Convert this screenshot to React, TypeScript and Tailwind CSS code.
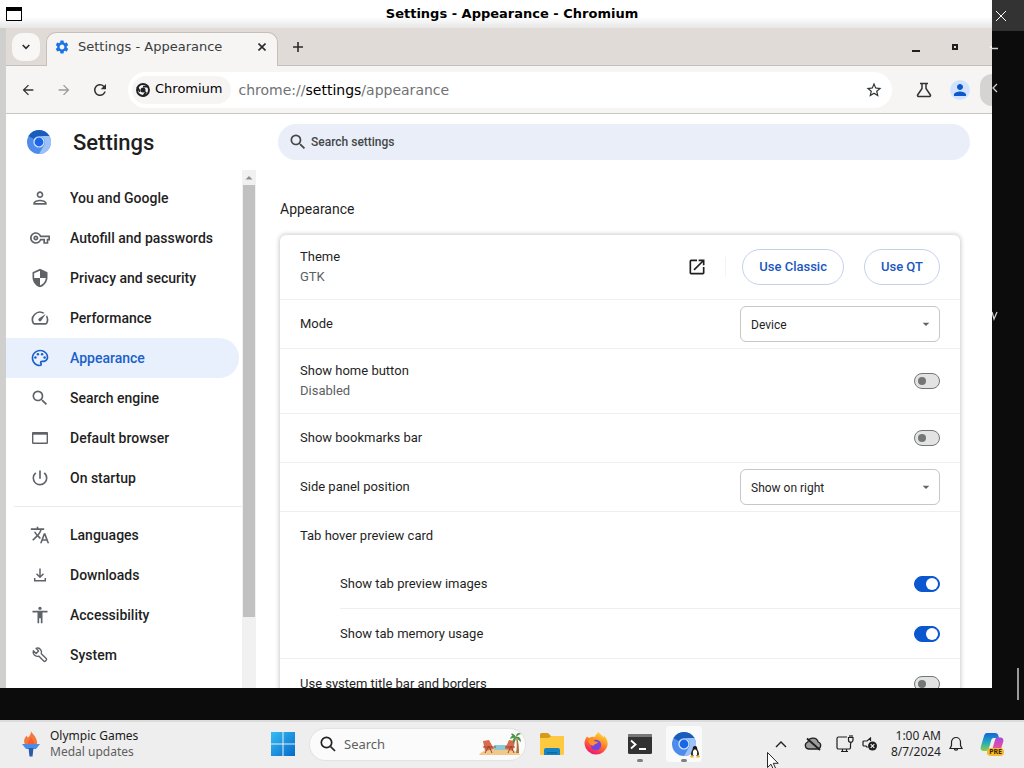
import type { ReactNode } from 'react'
import type { IconType } from 'react-icons'
import {
  MdAccessibility,
  MdArrowBack,
  MdArrowDropDown,
  MdArrowForward,
  MdOpenInNew,
  MdOutlinePalette,
  MdOutlinePerson,
  MdOutlineSpeed,
  MdOutlineVpnKey,
  MdPerson,
  MdPowerSettingsNew,
  MdRefresh,
  MdSearch,
  MdSecurity,
  MdSettings,
  MdStarBorder,
  MdTranslate,
} from 'react-icons/md'

interface IconProps {
  className?: string
}

interface NavItem {
  label: string
  icon: IconType | ((props: IconProps) => ReactNode)
  active?: boolean
}

function BrowserIcon({ className }: IconProps) {
  return (
    <svg viewBox="0 0 20 20" className={className} fill="none" stroke="currentColor" strokeWidth="1.4">
      <rect x="2.7" y="4.7" width="14.6" height="10.600" rx="0.500" />
      <path d="M2.500 5.500h15" strokeWidth="2.400" />
    </svg>
  )
}

function DownloadIcon({ className }: IconProps) {
  return (
    <svg viewBox="0 0 20 20" className={className} fill="none" stroke="currentColor" strokeWidth="1.5">
      <path d="M10 3.500v8.500M6.500 8.800 10 12.300l3.500-3.500M4.700 13v2.700h10.600V13" />
    </svg>
  )
}

function WrenchIcon({ className }: IconProps) {
  return (
    <svg viewBox="0 0 20 20" className={className} fill="none" stroke="currentColor" strokeWidth="1.4" strokeLinejoin="round">
      <path d="M11.300 8.700c.6-1.700.2-3.300-1-4.500C9 2.900 7.400 2.700 6 3.300l2.600 2.600-2.500 2.500-2.700-2.600c-.6 1.500-.3 3.100.9 4.300 1.200 1.200 2.800 1.500 4.400 1l5 5c.5.5 1.200.5 1.700 0l.8-.8c.5-.5.5-1.200 0-1.700z" />
    </svg>
  )
}

const mainNav: NavItem[] = [
  { label: 'You and Google', icon: MdOutlinePerson },
  { label: 'Autofill and passwords', icon: MdOutlineVpnKey },
  { label: 'Privacy and security', icon: MdSecurity },
  { label: 'Performance', icon: MdOutlineSpeed },
  { label: 'Appearance', icon: MdOutlinePalette, active: true },
  { label: 'Search engine', icon: MdSearch },
  { label: 'Default browser', icon: BrowserIcon },
  { label: 'On startup', icon: MdPowerSettingsNew },
]

const moreNav: NavItem[] = [
  { label: 'Languages', icon: MdTranslate },
  { label: 'Downloads', icon: DownloadIcon },
  { label: 'Accessibility', icon: MdAccessibility },
  { label: 'System', icon: WrenchIcon },
]

function ChromiumLogo({ className }: IconProps) {
  return (
    <svg viewBox="0 0 24 24" className={className} aria-hidden="true">
      <circle cx="12" cy="12" r="12" fill="#4f8bea" />
      <path d="M12 0a12 12 0 0 1 10.400 6H12a6 6 0 0 0-5.200 3L1.600 6A12 12 0 0 1 12 0z" fill="#1a5cba" />
      <path d="M22.400 6A12 12 0 0 1 12 24l5.200-9A6 6 0 0 0 12 6z" fill="#9cc2f8" />
      <circle cx="12" cy="12" r="5.600" fill="#d6e6fd" />
      <circle cx="12" cy="12" r="4.400" fill="#1a66e8" />
    </svg>
  )
}

function ChromeGlyph() {
  return (
    <svg viewBox="0 0 16 16" className="size-4" fill="none" aria-hidden="true">
      <circle cx="8" cy="8" r="6" stroke="#202124" strokeWidth="1.9" />
      <circle cx="8" cy="8" r="2.5" fill="#202124" />
      <path d="M8 4.6h5.6M5 9.7 2.2 4.900M11 9.7l-2.8 4.8" stroke="#202124" strokeWidth="1.9" />
    </svg>
  )
}

function TitleBar() {
  return (
    <header className="flex h-7 shrink-0 items-center bg-gradient-to-b from-white from-60% to-[#e6e6e6] pl-1.5">
      <svg viewBox="0 0 16 14" className="h-3.5 w-4" aria-hidden="true">
        <rect x="0.5" y="0.5" width="15" height="13" fill="#fff" stroke="#000" />
        <rect width="16" height="4" fill="#000" />
      </svg>
      <h1 className="flex-1 pl-2.5 text-center font-['DejaVu_Sans',sans-serif] text-[13px] font-bold text-black">
        Settings - Appearance - Chromium
      </h1>
    </header>
  )
}

function TabStrip() {
  return (
    <div className="flex h-[38px] shrink-0 items-end border-b border-[#c5bfba] bg-[#e0dbd7] pl-1.5">
      <button aria-label="Search tabs" className="mb-1 flex size-7 items-center justify-center rounded-[10px] bg-[#f8f7f6]">
        <svg viewBox="0 0 8 6" className="h-1.5 w-2" fill="none" stroke="#2b2b2b" strokeWidth="1.6">
          <path d="M.7 1 4 4.4 7.3 1" />
        </svg>
      </button>
      <div className="relative -mb-px ml-1.5 flex h-[34px] w-[232px] items-center rounded-t-[10px] border border-b-0 border-[#c5bfba] bg-[#f6f5f4] px-[7px] pb-1.5 font-['DejaVu_Sans',sans-serif] text-[13px] text-[#3a3d3f]">
        <MdSettings className="size-4 text-[#1a73e8]" />
        <span className="ml-2 flex-1 whitespace-nowrap">Settings - Appearance</span>
        <button aria-label="Close tab" className="flex size-4 items-center justify-center">
          <svg viewBox="0 0 8 8" className="size-2" stroke="#2b2b2b" strokeWidth="1.6">
            <path d="m.5.5 7 7m0-7-7 7" />
          </svg>
        </button>
      </div>
      <button aria-label="New tab" className="mb-2.5 ml-3 flex size-4 items-center justify-center">
        <svg viewBox="0 0 10 10" className="size-2.5" stroke="#2b2b2b" strokeWidth="1.6">
          <path d="M5 0v10M0 5h10" />
        </svg>
      </button>
      <div className="mb-2.5 ml-auto flex h-4 items-center gap-8">
        <button aria-label="Minimize" className="flex h-3 w-2 items-end pb-px">
          <span className="h-0.5 w-2 bg-[#1f1f1f]" />
        </button>
        <button aria-label="Maximize" className="size-1.5 border-2 border-[#1f1f1f]" />
        <button aria-label="Close window" className="h-0.5 w-0.5 bg-[#f8f7f6]" />
      </div>
    </div>
  )
}

function Toolbar() {
  return (
    <div className="flex h-12 shrink-0 items-center border-b border-[#c9c6c2] bg-[#f6f5f4] pl-3.5 text-[#303335]">
      <button aria-label="Back">
        <MdArrowBack className="size-4" />
      </button>
      <button aria-label="Forward" className="ml-5 text-[#9a9a9a]">
        <MdArrowForward className="size-4" />
      </button>
      <button aria-label="Reload" className="ml-[19px]">
        <MdRefresh className="size-[18px]" />
      </button>
      <div className="ml-[19px] flex h-9 flex-1 items-center rounded-full bg-white pr-[9px] pl-1 font-['DejaVu_Sans',sans-serif] text-sm">
        <span className="flex h-7 items-center gap-1 rounded-full bg-[#f6f5f4] pr-2 pl-[3px] text-[13px] text-black">
          <ChromeGlyph />
          Chromium
        </span>
        <span className="ml-2 flex-1 text-[#6f7274]">
          chrome://<span className="text-black">settings</span>/appearance
        </span>
        <button aria-label="Bookmark this tab">
          <MdStarBorder className="size-[18px]" />
        </button>
      </div>
      <button aria-label="Chrome Labs" className="ml-6">
        <svg viewBox="0 0 16 16" className="size-4" fill="none" stroke="currentColor" strokeWidth="1.5">
          <path d="M4 1.5h8M6 1.5v5L1.600 13a1 1 0 0 0 .8 1.500h11.200a1 1 0 0 0 .8-1.500L10 6.500v-5" />
        </svg>
      </button>
      <button aria-label="Profile" className="ml-[18px] flex size-5 items-center justify-center rounded-full bg-[#d3e3fd]">
        <MdPerson className="size-[18px] text-[#0b57d0]" />
      </button>
      <span className="ml-2.5 h-8 w-3 rounded-l-full bg-[#d6d4d3]" />
    </div>
  )
}

function NavGroup({ items }: { items: NavItem[] }) {
  return (
    <ul>
      {items.map(({ label, icon: Icon, active }) => (
        <li key={label}>
          <a
            href={`#${label.toLowerCase().replaceAll(' ', '-')}`}
            className={`mr-[3px] flex h-10 items-center gap-5 rounded-r-full pl-6 text-sm font-medium ${
              active ? 'bg-[#e8f0fe] text-[#1b60c9]' : 'text-[#1f1f1f]'
            }`}
          >
            <Icon className={active ? 'size-5 text-[#1b60c9]' : 'size-5 text-[#5f6368]'} />
            {label}
          </a>
        </li>
      ))}
    </ul>
  )
}

function Sidebar() {
  return (
    <div className="flex w-[250px] shrink-0">
      <nav className="flex-1 pt-2">
        <NavGroup items={mainNav} />
        <hr className="my-2 ml-2 border-[#ececec]" />
        <NavGroup items={moreNav} />
      </nav>
      <div className="flex w-3.5 flex-col items-center bg-[#f1f1f1]">
        <svg viewBox="0 0 14 15" className="h-[15px] w-3.5 shrink-0" fill="#8f8f8f">
          <path d="M3.5 9.5 7 6l3.5 3.5z" />
        </svg>
        <div className="h-5/6 w-3 bg-[#c1c1c1]" />
      </div>
    </div>
  )
}

interface RowProps {
  label: string
  sub?: string
  children?: ReactNode
  htmlFor?: string
}

function Row({ label, sub, children, htmlFor }: RowProps) {
  return (
    <div className={`flex items-center justify-between ${sub ? 'h-[65px]' : 'h-[49px]'}`}>
      <div className="leading-5">
        {htmlFor ? <label htmlFor={htmlFor}>{label}</label> : label}
        {sub && <p className="text-[#5c5f61]">{sub}</p>}
      </div>
      {children}
    </div>
  )
}

function ToggleRow({ label, sub, id, on }: { label: string; sub?: string; id: string; on?: boolean }) {
  return (
    <Row label={label} sub={sub} htmlFor={id}>
      <input
        id={id}
        type="checkbox"
        role="switch"
        defaultChecked={on}
        className="flex h-4 w-[26px] appearance-none items-center rounded-full border border-[#747775] bg-[#e3e3e3] px-[3px] before:size-2 before:rounded-full before:bg-[#747775] checked:justify-end checked:border-[#0b57d0] checked:bg-[#0b57d0] checked:px-px checked:before:size-3 checked:before:bg-white"
      />
    </Row>
  )
}

function SelectRow({ label, id, options }: { label: string; id: string; options: string[] }) {
  return (
    <Row label={label} htmlFor={id}>
      <div className="relative">
        <select id={id} className="h-9 w-[200px] appearance-none rounded-md border border-[#c7c7c7] bg-white px-2.5 pt-px text-xs">
          {options.map((option) => (
            <option key={option}>{option}</option>
          ))}
        </select>
        <MdArrowDropDown className="pointer-events-none absolute top-2.5 right-1.5 size-4 text-[#5f6368]" />
      </div>
    </Row>
  )
}

function AppearanceCard() {
  const pill = 'h-9 rounded-full border border-[#c4d0ea] px-4 font-medium text-[#1b57c0]'
  return (
    <div className="divide-y divide-[#efefef] rounded-t-md bg-white text-[13px] text-[#1f1f1f] shadow-[0_0_4px_1px_rgba(0,0,0,0.2)] *:px-5">
      <Row label="Theme" sub="GTK">
        <div className="flex items-center">
          <a href="#themes" aria-label="Open themes">
            <MdOpenInNew className="size-5" />
          </a>
          <span className="mr-4 ml-[18px] h-5 w-px bg-[#f3f3f3]" />
          <button className={pill}>Use Classic</button>
          <button className={`${pill} ml-5`}>Use QT</button>
        </div>
      </Row>
      <SelectRow label="Mode" id="mode" options={['Device', 'Light', 'Dark']} />
      <ToggleRow label="Show home button" sub="Disabled" id="home" />
      <ToggleRow label="Show bookmarks bar" id="bookmarks" />
      <SelectRow label="Side panel position" id="side-panel" options={['Show on right', 'Show on left']} />
      <div>
        <h4 className="flex h-12 items-center">Tab hover preview card</h4>
        <div className="-mr-5 ml-10 divide-y divide-[#efefef] *:pr-5">
          <ToggleRow label="Show tab preview images" id="preview-images" on />
          <ToggleRow label="Show tab memory usage" id="memory-usage" on />
        </div>
      </div>
      <ToggleRow label="Use system title bar and borders" id="title-bar" />
    </div>
  )
}

function SettingsPage() {
  return (
    <div className="flex min-h-0 flex-1 flex-col bg-white font-[Roboto,sans-serif]">
      <div className="flex h-14 shrink-0 items-center pr-[22px] pl-[21px]">
        <ChromiumLogo className="size-6" />
        <h2 className="ml-[22px] w-[205px] text-[22px] font-medium text-[#1f1f1f]">Settings</h2>
        <label className="flex h-9 flex-1 items-center gap-[3px] rounded-full bg-[#e9eef9] pl-2.5 text-[#444746]">
          <MdSearch className="size-5" />
          <input
            type="search"
            aria-label="Search settings"
            placeholder="Search settings"
            className="flex-1 bg-transparent text-xs font-medium outline-none placeholder:text-[#444746]"
          />
        </label>
      </div>
      <div className="flex min-h-0 flex-1 overflow-hidden">
        <Sidebar />
        <main className="flex-1 overflow-hidden pt-7 pr-8 pl-6">
          <h3 className="mb-[15px] text-sm leading-[22px] text-[#1f1f1f]">Appearance</h3>
          <AppearanceCard />
        </main>
      </div>
    </div>
  )
}

// Strip of the terminal window that is left visible beside the browser
function TerminalEdge() {
  return (
    <aside className="flex w-8 shrink-0 flex-col font-['Open_Sans',sans-serif] text-sm text-[#d0d0d0]">
      <div className="flex h-[31px] items-center bg-[#333333] pl-1">
        <button aria-label="Close terminal">
          <svg viewBox="0 0 10 10" className="size-2.5" stroke="#fff" strokeWidth="1">
            <path d="m0 0 10 10M10 0 0 10" />
          </svg>
        </button>
      </div>
      <svg viewBox="0 0 6 300" className="h-[300px] w-1.5" fill="none" stroke="#d0d0d0" strokeWidth="1.3">
        <path d="M0 17.5h6M5 53 1 57l4 4M0 281l2 7 3-7" />
      </svg>
      <span className="mt-auto mr-[5px] mb-5 h-8 w-0.5 self-end bg-[#9a9a9a]" />
    </aside>
  )
}

function TorchIcon() {
  return (
    <svg viewBox="0 0 18 26" className="h-[26px] w-[18px]" aria-hidden="true">
      <path d="M9 0c.6 3 7 6 6 13.500H3C1 9.500 3 6 5 4.500c0 1.500.5 2 1 2C8 5 9 3 9 0z" fill="#f2793a" />
      <path d="M9 6c1 3 4 4 3 8H6c-1-4 2-4 3-8z" fill="#fb5a35" />
      <path d="M0 13h18l-4 5H4z" fill="#4a8fe7" />
      <path d="M6.500 17h5l-1 8.500h-3z" fill="#2b5caa" />
    </svg>
  )
}

function WindowsIcon() {
  return (
    <svg viewBox="0 0 24 24" className="size-6">
      <defs>
        <linearGradient id="win" x1="0" y1="0" x2="1" y2="1">
          <stop offset="0" stopColor="#36bdf5" />
          <stop offset="1" stopColor="#0669c9" />
        </linearGradient>
      </defs>
      <path d="M0 0h11.500v11.500H0zM12.500 0H24v11.500H12.500zM0 12.500h11.500V24H0zM12.500 12.500H24V24H12.500z" fill="url(#win)" />
    </svg>
  )
}

function BeachIcon() {
  return (
    <svg viewBox="0 0 42 24" className="h-6 w-[42px]" aria-hidden="true">
      <path d="M0 23c3-5 10-6 20-6s20 2 21 6z" fill="#f0c98a" />
      <path d="M15 13h13v5H15z" fill="#8cc9d8" />
      <path d="m4 9 6-1 5 9-9 2z" fill="#d96a4c" />
      <path d="m26 17 4-9 6 1-2 10z" fill="#d96a4c" />
      <path d="M4 15h13M26 15h10M6 21l4-7m3 7-3-7M29 21l3-7m3 7-3-7" stroke="#9c4630" strokeWidth="1" />
      <path d="M37 5c1 6 1 11 0 16h3c0-6-.5-11-2-16z" fill="#a8713a" />
      <path d="M37 5c-3-3-5-1-6 2 2-1 4-1 6-2zm0 0c0-4 3-5 5-3-1 0-3 1-5 3zm0 0c3-1 5 1 5 5-2-1-3-3-5-5zm0 0c-2 0-4 3-3 6 2-1 3-3 3-6zM37 5c-3-5-5-3-5-3 1 2 3 3 5 3z" fill="#4b9445" />
    </svg>
  )
}

function FolderIcon() {
  return (
    <svg viewBox="0 0 24 22" className="h-[22px] w-6">
      <path d="M0 1.500A1.500 1.500 0 0 1 1.500 0H8l3 3h11.500A1.500 1.500 0 0 1 24 4.500V10H0z" fill="#d99a1b" />
      <path d="M0 5h8.500l3-2h11A1.500 1.500 0 0 1 24 4.500v16a1.500 1.500 0 0 1-1.500 1.500h-21A1.500 1.500 0 0 1 0 20.500z" fill="#fcc93f" />
      <path d="M4 22v-5a2 2 0 0 1 2-2h12a2 2 0 0 1 2 2v5z" fill="#1583c5" />
      <path d="M7 19h10v1.500H7z" fill="#0e6a9e" />
    </svg>
  )
}

function FirefoxIcon() {
  return (
    <svg viewBox="0 0 24 24" className="size-6">
      <defs>
        <linearGradient id="fox" x1="0.8" y1="0" x2="0.3" y2="1">
          <stop offset="0" stopColor="#ffe23c" />
          <stop offset="0.450" stopColor="#ff8a22" />
          <stop offset="0.800" stopColor="#f8364c" />
          <stop offset="1" stopColor="#e3168c" />
        </linearGradient>
      </defs>
      <path d="M3 4.500c1 .5 1.500 1 2 1.500 1.500-1 4-1.500 6-1C11.500 3 13 1 15 0c0 2 3 3 5 5.500 0-1 0-1.500-.3-2C23 6 24 10 23.500 13.500A11.700 11.700 0 0 1 .5 12C.4 9 1.500 6.500 3 4.500z" fill="url(#fox)" />
      <circle cx="12" cy="13" r="5.200" fill="#7543e3" />
      <path d="M4.500 8c3-1 5 0 6.500 1.500 1.500 0 2.500.2 3 1-1 1.500-3 1-4 2.500 0 1-1.500 1-3 0-1.500-1-2.500-3-2.500-5z" fill="#ff9425" />
    </svg>
  )
}

function TerminalIcon() {
  return (
    <svg viewBox="0 0 24 20" className="h-5 w-6">
      <rect width="24" height="20" rx="1.500" fill="#323232" />
      <path d="M0 1.500A1.500 1.500 0 0 1 1.500 0h21A1.500 1.500 0 0 1 24 1.500V3H0z" fill="#777" />
      <path d="m3 6.500 4.500 4L3 14.500M11 15h7" fill="none" stroke="#fff" strokeWidth="1.900" />
    </svg>
  )
}

function TuxBadge() {
  return (
    <svg viewBox="0 0 10 12" className="absolute -right-1 -bottom-0.5 h-3 w-2.5">
      <path d="M5 0c2 0 2.300 1.500 2.300 3.200C8.500 5 9.500 7.500 8.700 10H1.300C.5 7.500 1.500 5 2.700 3.200 2.700 1.500 3 0 5 0z" fill="#1a1a1a" />
      <ellipse cx="5" cy="7" rx="2.200" ry="3.200" fill="#fff" />
      <path d="m0 10.500 2-2 2 3H1zM10 10.500l-2-2-2 3h3zM4 3h2L5 4.200z" fill="#efb31c" />
    </svg>
  )
}

function CopilotIcon() {
  return (
    <svg viewBox="0 0 24 24" className="size-6">
      <defs>
        <linearGradient id="cop-l" x1="0" y1="0" x2="0" y2="1">
          <stop offset="0" stopColor="#1565d8" />
          <stop offset="0.500" stopColor="#20a7c0" />
          <stop offset="1" stopColor="#8ccf4d" />
        </linearGradient>
        <linearGradient id="cop-r" x1="0" y1="0" x2="0" y2="1">
          <stop offset="0" stopColor="#a64be0" />
          <stop offset="0.600" stopColor="#ec4f9a" />
          <stop offset="1" stopColor="#ff9b47" />
        </linearGradient>
      </defs>
      <path d="M7 1h8c2 0 3 1 3.500 3L19 6h-5c-2 0-2.500 1-3 3l-2 7c-.5 2-1.500 3-3 3H4c-3 0-4-2-3-5L4 4c.5-2 1.500-3 3-3z" fill="url(#cop-l)" />
      <path d="M17 23H9c-1.500 0-2-1-1.500-2.500L11 18c1 0 1.500-1 2-3l2-7c.5-2 1.500-2.500 3-2.500h2c3 0 4 2 3 5L20 20c-.5 2-1.500 3-3 3z" fill="url(#cop-r)" />
    </svg>
  )
}

function Tray() {
  return (
    <div className="ml-auto flex items-center pr-5 text-[#1f1f1f]">
      <button aria-label="Show hidden icons">
        <svg viewBox="0 0 12 8" className="h-2 w-3" fill="none" stroke="currentColor" strokeWidth="1.4">
          <path d="M1 7l5-5 5 5" />
        </svg>
      </button>
      <button aria-label="OneDrive" className="ml-[17px]">
        <svg viewBox="0 0 18 14" className="h-3.5 w-[18px]" fill="none" stroke="currentColor" strokeWidth="1.3">
          <path d="M4.500 12a3.600 3.600 0 0 1-.7-7 5.400 5.400 0 0 1 10.400 0 3.600 3.600 0 0 1-.7 7z" fill="#9c9c9c" />
          <path d="m3 1.500 13 11.500" strokeWidth="1.800" />
        </svg>
      </button>
      <button aria-label="Network" className="ml-3.5">
        <svg viewBox="0 0 18 18" className="size-[18px]" fill="none" stroke="currentColor" strokeWidth="1.200">
          <path d="M11 2H2.500A1.500 1.500 0 0 0 1 3.500v9A1.500 1.500 0 0 0 2.500 14H13a1.500 1.500 0 0 0 1.500-1.500V9M5 16.500h7M6.500 14v2.500m4-2.500v2.500M12.500 2.500h4.500V5a2 2 0 0 1-4.500 0zM14 0v2.500M16 0v2.500M14.700 7v2" />
        </svg>
      </button>
      <button aria-label="Volume" className="ml-2">
        <svg viewBox="0 0 16 14" className="h-3.5 w-4" fill="none" stroke="currentColor" strokeWidth="1.200">
          <path d="M8.500 4V1L5 4H2a1 1 0 0 0-1 1v3a1 1 0 0 0 1 1h2l1.500 1.500" />
          <circle cx="10.500" cy="9" r="4.500" fill="currentColor" stroke="none" />
          <path d="m8.700 7.200 3.600 3.600m0-3.600-3.600 3.600" stroke="#eee" />
        </svg>
      </button>
      <time className="ml-[13px] text-right">
        1:00 AM
        <br />
        8/7/2024
      </time>
      <button aria-label="Notifications" className="ml-2">
        <svg viewBox="0 0 14 16" className="h-4 w-3.5" fill="none" stroke="currentColor" strokeWidth="1.200">
          <path d="M7 1.500a4.500 4.500 0 0 0-4.500 4.500v3.500L1 12.500h12l-1.500-3V6A4.500 4.500 0 0 0 7 1.500zM5.300 12.500a1.700 1.700 0 0 0 3.400 0" />
        </svg>
      </button>
      <button aria-label="Copilot" className="relative ml-[17px]">
        <CopilotIcon />
        <span className="absolute right-0 bottom-0 rounded-sm bg-[#f7b92c] px-0.5 text-[7px] leading-2 font-bold text-[#3a2500]">
          PRE
        </span>
      </button>
    </div>
  )
}

function Taskbar() {
  return (
    <footer className="flex h-12 shrink-0 items-center border-t-2 border-[#dcdcdc] bg-[#eeeeee] pb-0.5 font-['Noto_Sans',sans-serif] text-xs leading-4 text-[#1a1a1a]">
      <button className="flex w-[271px] items-center gap-2.5 pl-[22px] text-left">
        <TorchIcon />
        <span>
          Olympic Games
          <br />
          <span className="text-[#5f5f5f]">Medal updates</span>
        </span>
      </button>
      <button aria-label="Start">
        <WindowsIcon />
      </button>
      <label className="ml-[15px] flex h-[31px] w-[215px] items-center rounded-full bg-[#fbfbfb] pr-1 pl-2.5 shadow-[0_0_1px_1px_rgba(0,0,0,0.05)]">
        <svg viewBox="0 0 16 16" className="size-4 shrink-0" fill="none" stroke="#222" strokeWidth="1.700">
          <circle cx="6.500" cy="6.500" r="5.200" />
          <path d="m10.500 10.500 4.500 4.500" />
        </svg>
        <input
          type="search"
          aria-label="Search"
          placeholder="Search"
          className="ml-2 min-w-0 flex-1 bg-transparent text-[13px] outline-none placeholder:text-[#606060]"
        />
        <BeachIcon />
      </label>
      <button aria-label="File Explorer" className="ml-[15px]">
        <FolderIcon />
      </button>
      <button aria-label="Firefox" className="ml-5">
        <FirefoxIcon />
      </button>
      <button aria-label="Terminal" className="relative ml-5">
        <TerminalIcon />
        <span className="absolute -bottom-2 left-[9px] h-[3px] w-1.5 rounded-full bg-[#808080]" />
      </button>
      <button aria-label="Chromium" className="relative ml-3.5 flex size-9 items-center justify-center rounded bg-[#fafafa]">
        <span className="relative">
          <ChromiumLogo className="size-6" />
          <TuxBadge />
        </span>
        <span className="absolute bottom-0 left-[15px] h-[3px] w-1.5 rounded-full bg-[#808080]" />
      </button>
      <Tray />
    </footer>
  )
}

function Cursor() {
  return (
    <svg viewBox="0 0 12 18" className="pointer-events-none absolute top-[752px] left-[767px] h-[18px] w-3">
      <path d="M.5.500v15l3.500-3.300 2.300 5 2.200-1-2.200-4.900h4.900z" fill="#fff" stroke="#111" strokeWidth="0.900" />
    </svg>
  )
}

export default function App() {
  return (
    <div className="relative flex h-screen flex-col overflow-hidden bg-[#0c0c0c]">
      <div className="flex min-h-0 flex-1">
        <section className="mb-8 flex min-w-0 flex-1 flex-col overflow-hidden bg-[#cfcfcd]">
          <TitleBar />
          <div className="flex min-h-0 flex-1 flex-col border-l-[6px] border-[#cfcfcd]">
            <TabStrip />
            <Toolbar />
            <SettingsPage />
          </div>
        </section>
        <TerminalEdge />
      </div>
      <Taskbar />
      <Cursor />
    </div>
  )
}
